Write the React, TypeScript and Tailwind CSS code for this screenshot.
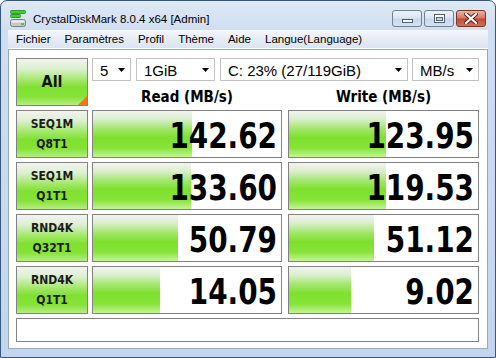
import React from "react";

const rows = [
  { l1: "SEQ1M", l2: "Q8T1", r: 142.62, w: 123.95 },
  { l1: "SEQ1M", l2: "Q1T1", r: 133.6, w: 119.53 },
  { l1: "RND4K", l2: "Q32T1", r: 50.79, w: 51.12 },
  { l1: "RND4K", l2: "Q1T1", r: 14.05, w: 9.02 },
];

const BTN_BG =
  "bg-[linear-gradient(to_bottom,#f1f3f0_0%,#dcefcf_22%,#a4e86c_45%,#80e030_62%,#86e238_82%,#b4ee84_100%)]";
const BAR_BG =
  "bg-[linear-gradient(to_bottom,#f3f3f2_0%,#d9eecb_18%,#9fe667_40%,#7ee02d_58%,#86e437_80%,#c4f39c_100%)]";

const numFont = {
  fontFamily: '"DejaVu Sans Condensed", "DejaVu Sans", sans-serif',
};

function Arrow() {
  return (
    <svg width="8" height="4" viewBox="0 0 8 4" className="shrink-0">
      <path d="M0 0 H7 L3.5 4 Z" fill="#000" />
    </svg>
  );
}

function Combo({ w, text }: { w: string; text: string }) {
  return (
    <div
      className={`${w} h-[23px] border border-[#c3c3c3] bg-white flex items-center pl-[7px] pr-[4px] justify-between`}
    >
      <span className="text-[15px] leading-none text-black pt-[2px]">{text}</span>
      <Arrow />
    </div>
  );
}

function ValueBox({ value, inner, w }: { value: number; inner: number; w: string }) {
  const barW = Math.max(0, Math.round((inner * (Math.log10(value) + 1)) / 6));
  return (
    <div className={`${w} h-[48px] border border-[#828282] bg-white relative flex items-center justify-end pr-[4px]`}>
      <div className={`absolute left-0 top-0 bottom-0 ${BAR_BG}`} style={{ width: barW }} />
      <span
        className="relative font-bold text-[31px] leading-none text-black scale-y-[1.13] translate-y-[2px] font-stretch-condensed"
        style={numFont}
      >
        {value.toFixed(2)}
      </span>
    </div>
  );
}

function CaptionButton({ kind }: { kind: "min" | "max" | "close" }) {
  const base =
    kind === "close"
      ? "border-[#7d3328] bg-[linear-gradient(to_bottom,#eab3a8_0%,#d77a68_45%,#c54a35_55%,#d2705a_100%)]"
      : "border-[#6f8299] bg-[linear-gradient(to_bottom,#eef3fa_0%,#dbe5f2_45%,#c9d8eb_55%,#d7e3f2_100%)]";
  return (
    <div className={`w-[30px] h-[17px] border rounded-[3px] ${base} flex items-center justify-center`}>
      {kind === "min" && (
        <div className="w-[11px] h-[4px] mt-[4px] bg-white border border-[#4f5f73]" />
      )}
      {kind === "max" && (
        <div className="w-[11px] h-[9px] border border-[#4f5f73] bg-white flex items-center justify-center">
          <div className="w-[7px] h-[4px] border border-[#4f5f73] bg-[#c9d8eb]" />
        </div>
      )}
      {kind === "close" && (
        <svg width="14" height="11" viewBox="0 0 14 11">
          <path
            d="M2 1 L12 10 M12 1 L2 10"
            stroke="#5b1f17"
            strokeWidth="4"
            strokeLinecap="square"
          />
          <path
            d="M2 1 L12 10 M12 1 L2 10"
            stroke="#ffffff"
            strokeWidth="2.2"
            strokeLinecap="square"
          />
        </svg>
      )}
    </div>
  );
}

function AppIcon() {
  return (
    <svg width="16" height="17" viewBox="0 0 16 17">
      <rect x="0.5" y="0.5" width="15" height="3" rx="1" fill="#3fcf2f" stroke="#1f8a18" strokeWidth="0.8" />
      <rect x="0.5" y="4.5" width="10" height="3" rx="1" fill="#3fcf2f" stroke="#1f8a18" strokeWidth="0.8" />
      <rect x="0.5" y="9.5" width="15" height="7" rx="2" fill="#c9c9c9" stroke="#6a6a6a" strokeWidth="0.8" />
      <rect x="1.5" y="10.5" width="13" height="2" fill="#efefef" />
      <rect x="11" y="13" width="3" height="2" fill="#3fcf2f" />
    </svg>
  );
}

export default function App() {
  return (
    <div
      className="w-[496px] h-[358px] flex flex-col border border-[#34587f] rounded-t-[7px] overflow-hidden bg-[linear-gradient(to_bottom,#dfe9f6_0px,#cfdef0_30px,#c3d6ed_100%)]"
      style={{ fontFamily: '"Liberation Sans", Arial, sans-serif' }}
    >
      {/* Title bar */}
      <div className="h-[29px] flex items-start shrink-0">
        <div className="pl-[9px] pt-[9px]">
          <AppIcon />
        </div>
        <div className="pl-[7px] pt-[11px] text-[11.5px] leading-[14px] text-black">
          CrystalDiskMark 8.0.4 x64 [Admin]
        </div>
        <div className="ml-auto flex gap-[2px] pt-[9px] pr-[9px]">
          <CaptionButton kind="min" />
          <CaptionButton kind="max" />
          <CaptionButton kind="close" />
        </div>
      </div>

      <div className="flex-1 flex flex-col px-[7px] pb-[8px]">
        {/* Menu bar */}
        <div className="h-[19px] shrink-0 flex items-center border-b border-white bg-[linear-gradient(to_bottom,#f4f7fb_0%,#e6ecf5_50%,#dce4f0_100%)] text-[11.5px] text-black pl-[1px]">
          {["Fichier", "Paramètres", "Profil", "Thème", "Aide", "Langue(Language)"].map((m) => (
            <span key={m} className="px-[7px] leading-[18px]">
              {m}
            </span>
          ))}
        </div>

        {/* Client area */}
        <div className="flex-1 bg-white border border-[#9aa9bb] pt-[8px] pl-[7px] pr-[8px] flex flex-col">
          {/* Top block */}
          <div className="flex gap-[4px]">
            <div
              className={`w-[72px] h-[48px] border border-[#828282] ${BTN_BG} relative flex items-center justify-center`}
            >
              <span className="font-bold text-[16px] leading-none text-[#111] font-stretch-condensed" style={numFont}>
                All
              </span>
              <svg width="9" height="9" viewBox="0 0 9 9" className="absolute right-0 bottom-0">
                <path d="M9 0 L9 9 L0 9 Z" fill="#f2771a" />
              </svg>
            </div>
            <div className="flex flex-col">
              <div className="flex">
                <Combo w="w-[39px]" text="5" />
                <div className="w-[5px]" />
                <Combo w="w-[79px]" text="1GiB" />
                <div className="w-[5px]" />
                <Combo w="w-[188px]" text="C: 23% (27/119GiB)" />
                <div className="w-[4px]" />
                <Combo w="w-[67px]" text="MB/s" />
              </div>
              <div className="flex gap-[6px] mt-[7px] h-[18px] items-center">
                <div
                  className="w-[190px] text-center font-bold text-[15px] leading-none text-black font-stretch-condensed"
                  style={numFont}
                >
                  Read (MB/s)
                </div>
                <div
                  className="w-[191px] text-center font-bold text-[15px] leading-none text-black font-stretch-condensed"
                  style={numFont}
                >
                  Write (MB/s)
                </div>
              </div>
            </div>
          </div>

          {/* Result rows */}
          {rows.map((r, i) => (
            <div key={i} className="flex mt-[4px]">
              <div
                className={`w-[72px] h-[48px] border border-[#828282] ${BTN_BG} flex flex-col items-center justify-center`}
              >
                <span className="font-bold text-[12px] leading-[20px] text-[#1b1b1b] font-stretch-condensed" style={numFont}>
                  {r.l1}
                </span>
                <span className="font-bold text-[12px] leading-[20px] text-[#1b1b1b] font-stretch-condensed" style={numFont}>
                  {r.l2}
                </span>
              </div>
              <div className="w-[4px]" />
              <ValueBox value={r.r} inner={188} w="w-[190px]" />
              <div className="w-[6px]" />
              <ValueBox value={r.w} inner={189} w="w-[191px]" />
            </div>
          ))}

          {/* Status bar */}
          <div className="mt-[4px] h-[24px] w-[463px] border border-[#828282] bg-white" />
        </div>
      </div>
    </div>
  );
}
